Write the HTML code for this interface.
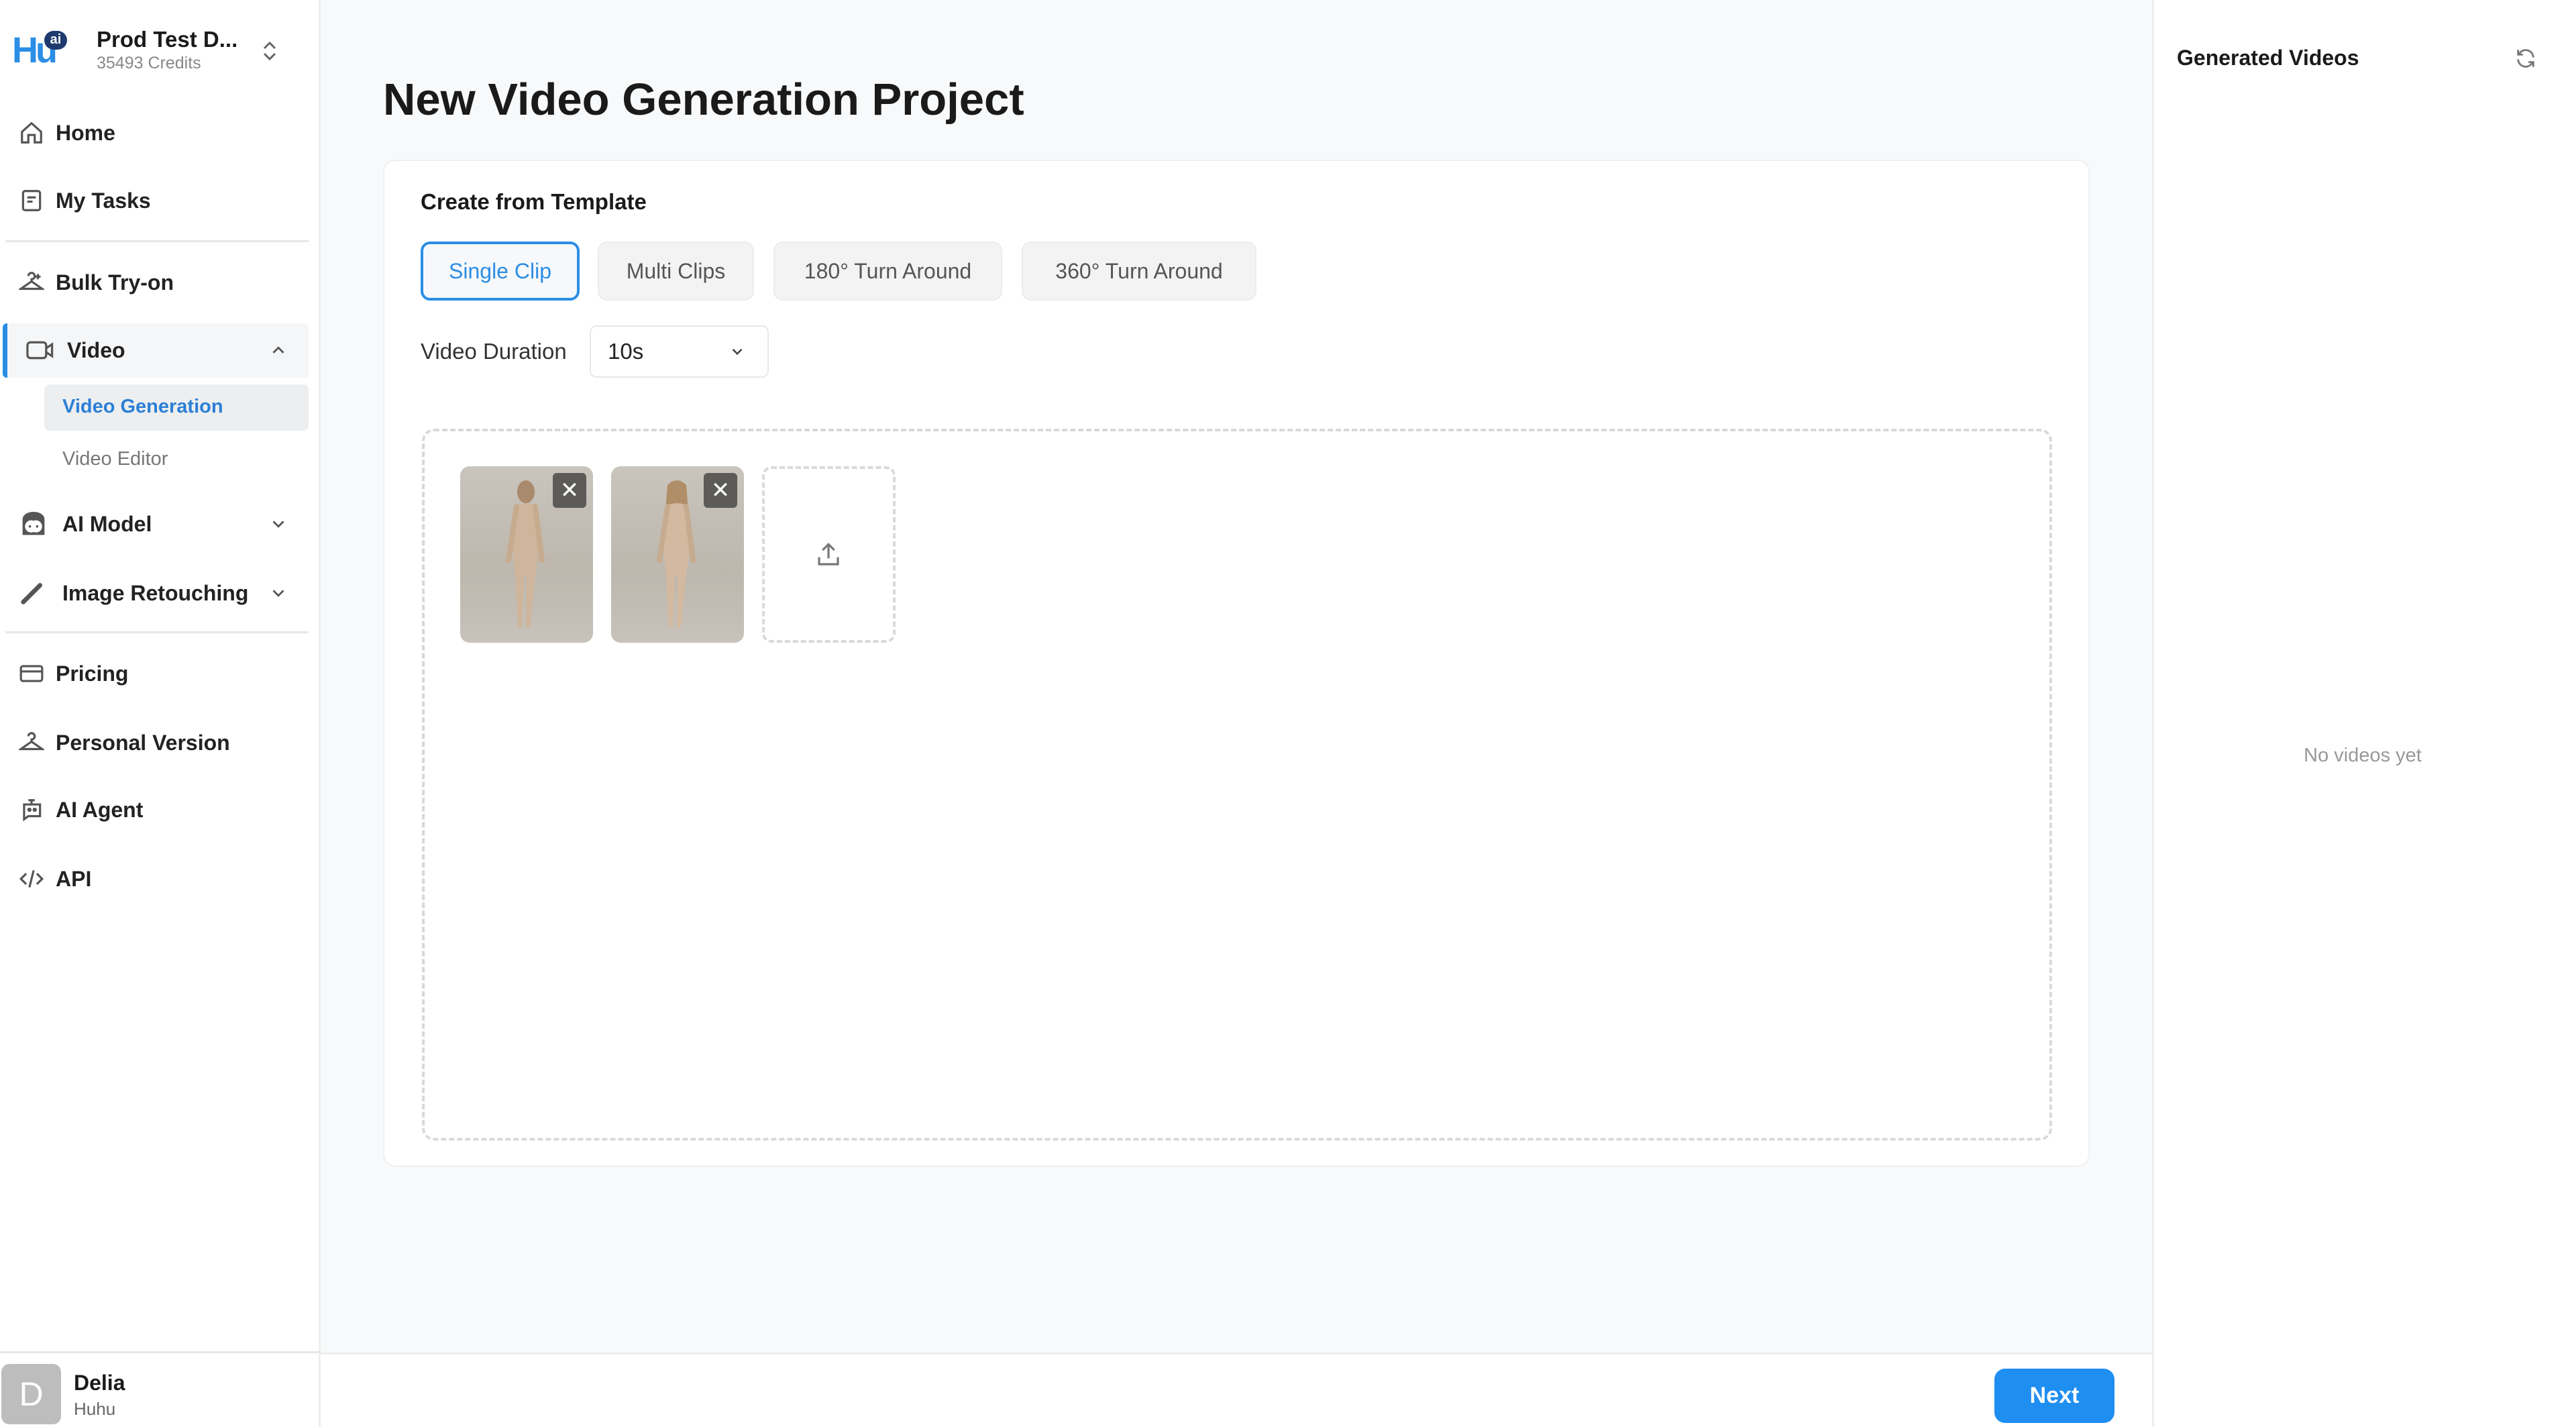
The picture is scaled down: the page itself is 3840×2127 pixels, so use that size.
<!DOCTYPE html>
<html><head><meta charset="utf-8">
<style>
*{box-sizing:border-box;margin:0;padding:0}
body{width:3840px;height:2127px;overflow:hidden;background:#f8f9fa;font-family:"Liberation Sans",sans-serif;color:#1a1a1a;position:relative}
.abs{position:absolute}
.side{left:0;top:0;width:478px;height:2127px;background:#fff;border-right:3px solid #eceef0}
.item{position:absolute;left:0;width:478px;height:80px;display:flex;align-items:center;font-size:32px;font-weight:600;color:#222}
.item svg{position:absolute;left:28px}
.item span{position:absolute;left:83px}
.item svg.chev{left:400px}
.div{position:absolute;left:8px;width:452px;height:3px;background:#e6e7e9}
.right{left:3208px;top:0;width:632px;height:2127px;background:#fff;border-left:3px solid #eceef0}
.card{left:571px;top:238px;width:2544px;height:1501px;background:#fff;border:2px solid #eef0f2;border-radius:18px}
.btn{position:absolute;top:360px;height:88px;border-radius:14px;background:#f3f3f4;border:2px solid #ececee;font-size:32px;color:#555;display:flex;align-items:center;justify-content:center}
.img{position:absolute;top:695px;width:198px;height:263px;border-radius:14px;background:linear-gradient(180deg,#c9c4bc,#bdb7ae 60%,#c7c2ba);overflow:hidden}
.x{position:absolute;right:10px;top:10px;width:50px;height:52px;background:#5d5b58;border-radius:6px;color:#fff;font-size:34px;display:flex;align-items:center;justify-content:center}
</style></head><body>
<div class="abs side">
  <div class="abs" style="left:18px;top:44px;font-size:54px;font-weight:700;color:#2b8ee6;letter-spacing:-4px">Hu</div>
  <div class="abs" style="left:66px;top:46px;width:34px;height:28px;border-radius:14px;background:#1e3a6e;color:#fff;font-size:20px;font-weight:700;text-align:center;line-height:27px">ai</div>
  <div class="abs" style="left:144px;top:40px;font-size:33px;font-weight:700">Prod Test D...</div>
  <div class="abs" style="left:144px;top:80px;font-size:25px;color:#888">35493 Credits</div>
  <svg class="abs" style="left:390px;top:58px" width="24" height="36" viewBox="0 0 24 36" fill="none" stroke="#666" stroke-width="3"><path d="M4 14 L12 6 L20 14 M4 22 L12 30 L20 22"/></svg>

  <div class="item" style="top:158px"><svg width="38" height="38" viewBox="0 0 24 24" fill="none" stroke="#555" stroke-width="2"><path d="M3 11 L12 3 L21 11 V21 H15 V14 H9 V21 H3 Z"/></svg><span>Home</span></div>
  <div class="item" style="top:259px"><svg width="38" height="38" viewBox="0 0 24 24" fill="none" stroke="#555" stroke-width="2"><rect x="4" y="3" width="16" height="18" rx="2"/><path d="M8 9h8M8 13h5"/></svg><span>My Tasks</span></div>
  <div class="div" style="top:358px"></div>
  <div class="item" style="top:381px"><svg width="38" height="38" viewBox="0 0 24 24" fill="none" stroke="#555" stroke-width="2"><path d="M9 6a3 3 0 1 1 3 3v2L2 18h20L12 11M18 4v5M15.5 6.5h5"/></svg><span>Bulk Try-on</span></div>
  <div class="abs" style="left:4px;top:482px;width:456px;height:81px;background:#f5f6f7;border-left:7px solid #2b8ee6;border-radius:6px"></div>
  <div class="item" style="top:482px"><svg style="left:38px" width="44" height="36" viewBox="0 0 30 24" fill="none" stroke="#555" stroke-width="2.2"><rect x="2" y="4" width="19" height="16" rx="3"/><path d="M21 10l6-4v12l-6-4"/></svg><span style="left:100px">Video</span><svg class="chev" width="30" height="30" viewBox="0 0 24 24" fill="none" stroke="#555" stroke-width="2.2"><path d="M6 15l6-6 6 6"/></svg></div>
  <div class="abs" style="left:66px;top:573px;width:394px;height:69px;background:#eceef0;border-radius:8px"></div>
  <div class="abs" style="left:93px;top:590px;font-size:29px;font-weight:700;color:#2b7fd6">Video Generation</div>
  <div class="abs" style="left:93px;top:668px;font-size:29px;color:#777">Video Editor</div>
  <div class="item" style="top:741px"><svg width="44" height="40" viewBox="0 0 24 22" fill="#555"><path d="M3 7a9 6 0 0 1 18 0v13H3z"/><circle cx="10" cy="13" r="5" fill="#fff"/><circle cx="14" cy="13" r="5" fill="#fff"/><circle cx="9" cy="13" r="1" fill="#555"/><circle cx="15" cy="13" r="1" fill="#555"/></svg><span style="left:93px">AI Model</span><svg class="chev" width="30" height="30" viewBox="0 0 24 24" fill="none" stroke="#555" stroke-width="2.2"><path d="M6 9l6 6 6-6"/></svg></div>
  <div class="item" style="top:844px"><svg width="40" height="40" viewBox="0 0 24 24" fill="none" stroke="#555" stroke-width="4" stroke-linecap="round"><path d="M4 20L19 5"/></svg><span style="left:93px">Image Retouching</span><svg class="chev" width="30" height="30" viewBox="0 0 24 24" fill="none" stroke="#555" stroke-width="2.2"><path d="M6 9l6 6 6-6"/></svg></div>
  <div class="div" style="top:941px"></div>
  <div class="item" style="top:964px"><svg width="38" height="38" viewBox="0 0 24 24" fill="none" stroke="#555" stroke-width="2"><rect x="2" y="5" width="20" height="14" rx="2"/><path d="M2 10h20"/></svg><span>Pricing</span></div>
  <div class="item" style="top:1067px"><svg width="38" height="38" viewBox="0 0 24 24" fill="none" stroke="#555" stroke-width="2"><path d="M9 6a3 3 0 1 1 3 3v2L2 18h20L12 11"/></svg><span>Personal Version</span></div>
  <div class="item" style="top:1167px"><svg width="38" height="38" viewBox="0 0 24 24" fill="none" stroke="#555" stroke-width="2"><path d="M5 7h15v11H9l-4 3zM12 7V3M9 3h6"/><circle cx="10" cy="12" r="1"/><circle cx="15" cy="12" r="1"/></svg><span>AI Agent</span></div>
  <div class="item" style="top:1270px"><svg width="38" height="38" viewBox="0 0 24 24" fill="none" stroke="#555" stroke-width="2"><path d="M7 7l-5 5 5 5M17 7l5 5-5 5M14 4l-4 16"/></svg><span>API</span></div>
  <div class="div" style="top:2014px;left:0;width:478px"></div>
  <div class="abs" style="left:2px;top:2033px;width:89px;height:90px;border-radius:12px;background:#bdbdbd;color:#fff;font-size:50px;text-align:center;line-height:90px">D</div>
  <div class="abs" style="left:110px;top:2043px;font-size:32px;font-weight:700">Delia</div>
  <div class="abs" style="left:110px;top:2085px;font-size:26px;color:#666">Huhu</div>
</div>

<div class="abs" style="left:571px;top:110px;font-size:67px;font-weight:700;color:#1a1a1a">New Video Generation Project</div>
<div class="abs card"></div>
<div class="abs" style="left:627px;top:282px;font-size:33px;font-weight:700">Create from Template</div>
<div class="btn" style="left:627px;width:237px;background:#f6f8fb;border:4px solid #2b8ee6;color:#2b8ee6">Single Clip</div>
<div class="btn" style="left:891px;width:233px">Multi Clips</div>
<div class="btn" style="left:1153px;width:341px">180° Turn Around</div>
<div class="btn" style="left:1523px;width:350px">360° Turn Around</div>
<div class="abs" style="left:627px;top:505px;font-size:33px;color:#333">Video Duration</div>
<div class="abs" style="left:879px;top:485px;width:267px;height:78px;border:2px solid #e6e7e9;border-radius:10px;background:#fff"></div>
<div class="abs" style="left:906px;top:505px;font-size:33px;color:#222">10s</div>
<svg class="abs" style="left:1086px;top:511px" width="26" height="26" viewBox="0 0 24 24" fill="none" stroke="#444" stroke-width="2.4"><path d="M6 9l6 6 6-6"/></svg>
<div class="abs" style="left:629px;top:639px;width:2430px;height:1061px;border:4px dashed #d9d9d9;border-radius:18px"></div>
<div class="img" style="left:686px"><svg class="abs" style="left:0;top:0" width="198" height="263" viewBox="0 0 198 263"><ellipse cx="98" cy="38" rx="13" ry="17" fill="#a98a6c"/><path d="M84 58 Q98 52 112 58 L118 120 L112 160 L104 240 L98 240 L99 165 L95 165 L92 240 L86 240 L82 160 L78 120 Z" fill="#cfb59b"/><path d="M84 60 L72 140 M112 60 L122 140" stroke="#c7ab8f" stroke-width="8" stroke-linecap="round"/></svg><div class="x">✕</div></div>
<div class="img" style="left:911px"><svg class="abs" style="left:0;top:0" width="198" height="263" viewBox="0 0 198 263"><path d="M84 28 Q98 14 112 28 L116 80 L80 80 Z" fill="#b08e68"/><path d="M84 58 Q98 52 112 58 L118 120 L112 160 L104 240 L98 240 L99 165 L95 165 L92 240 L86 240 L82 160 L78 120 Z" fill="#d3b9a0"/><path d="M84 60 L72 140 M112 60 L122 140" stroke="#c7ab8f" stroke-width="8" stroke-linecap="round"/></svg><div class="x">✕</div></div>
<div class="abs" style="left:1136px;top:695px;width:199px;height:263px;border:4px dashed #d9d9d9;border-radius:14px"></div>
<svg class="abs" style="left:1214px;top:806px" width="42" height="42" viewBox="0 0 24 24" fill="none" stroke="#777" stroke-width="1.8"><path d="M12 15V3M7 8l5-5 5 5M4 14v6h16v-6"/></svg>
<div class="abs" style="left:478px;top:2016px;width:2730px;height:111px;background:#fff;border-top:3px solid #eceef0"></div>
<div class="abs" style="left:2973px;top:2040px;width:179px;height:81px;background:#1f8ef1;border-radius:16px;color:#fff;font-size:34px;font-weight:600;text-align:center;line-height:81px">Next</div>

<div class="abs right"></div>
<div class="abs" style="left:3245px;top:68px;font-size:32px;font-weight:700">Generated Videos</div>
<svg class="abs" style="left:3748px;top:70px" width="34" height="34" viewBox="0 0 24 24" fill="none" stroke="#777" stroke-width="2"><path d="M20 11a8 8 0 0 0-14-5L4 8M4 13a8 8 0 0 0 14 5l2-2M4 3v5h5M20 21v-5h-5"/></svg>
<div class="abs" style="left:3322px;top:1110px;width:400px;text-align:center;font-size:29px;color:#999">No videos yet</div>
</body></html>
